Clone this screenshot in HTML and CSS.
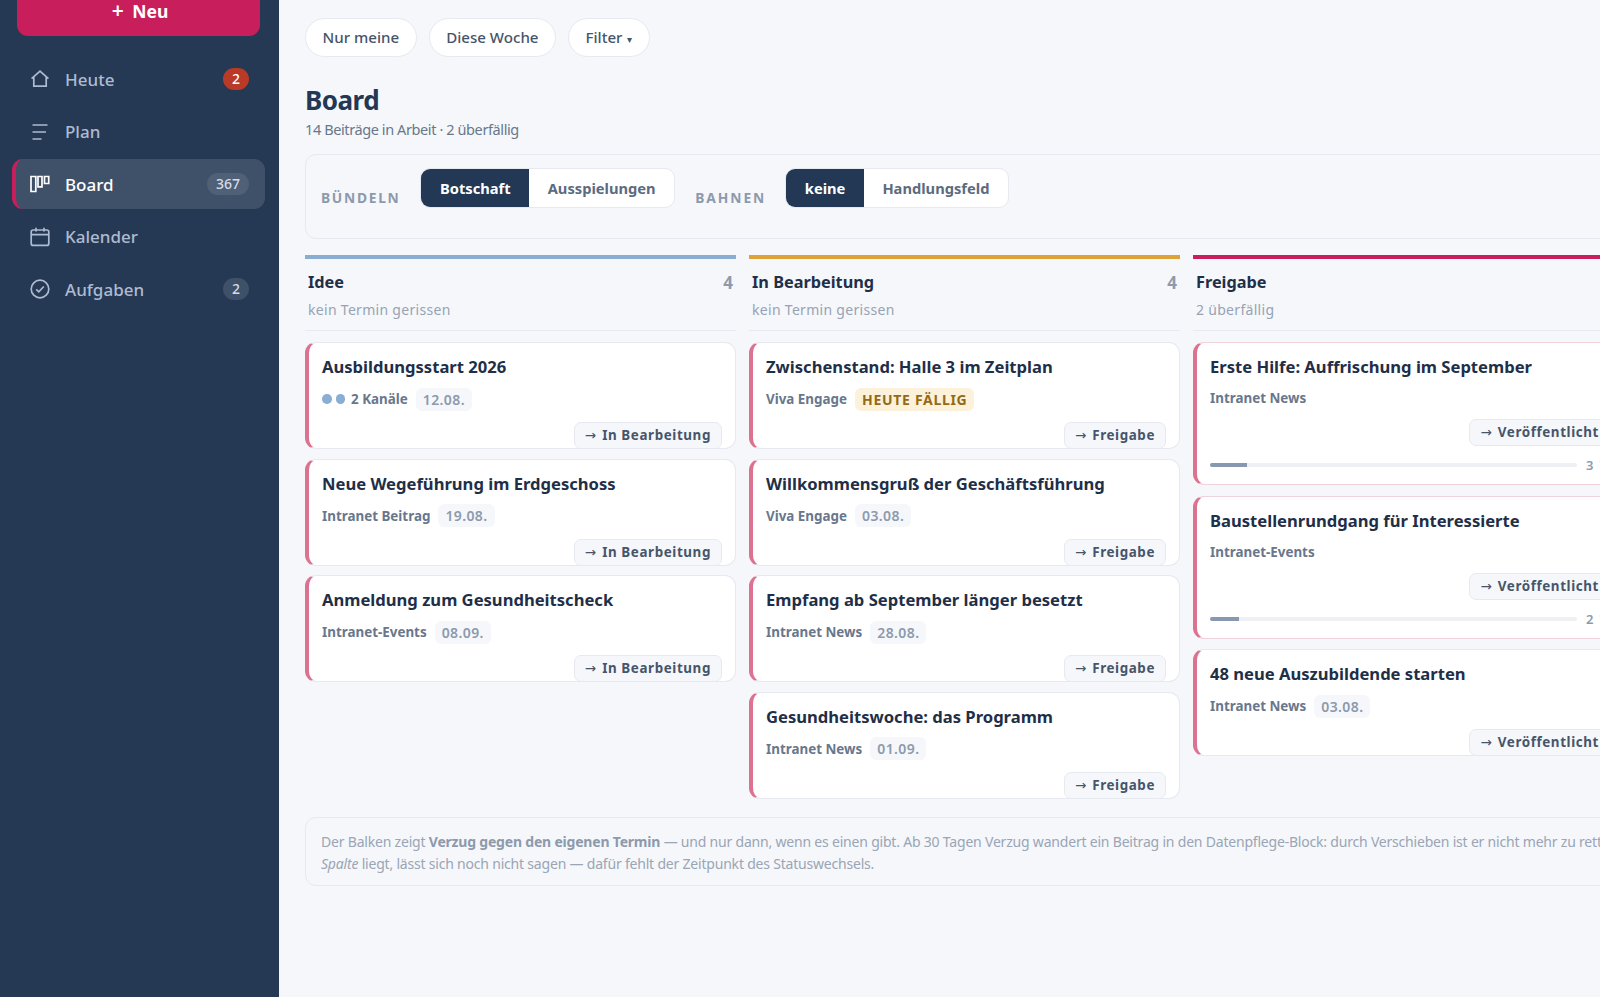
FILE: index.html
```html
<!DOCTYPE html>
<html lang="de">
<head>
<meta charset="utf-8">
<title>Board</title>
<link rel="stylesheet" href="styles.css">
</head>
<body>
<div class="app">
  <aside class="sidebar">
    <button class="new-btn"><span class="plus">+</span> Neu</button>
    <nav class="nav">
      <a class="nav-item">
        <svg class="nav-icon" viewBox="0 0 20 20"><path d="M1.6 9.6 10 2.2l8.4 7.4M3.8 8V17.2h12.4V8"/></svg>
        <span class="nav-label">Heute</span><span class="badge badge-red">2</span>
      </a>
      <a class="nav-item">
        <svg class="nav-icon" viewBox="0 0 20 20"><path d="M2.5 3h15M2.5 10h13.5M2.5 17h9"/></svg>
        <span class="nav-label">Plan</span>
      </a>
      <a class="nav-item active">
        <svg class="nav-icon" viewBox="0 0 20 20"><path d="M1 2.5h4.8v15H1zM8 2.5h4v10.4H8zM14.5 2.5h4.2v7h-4.2z"/></svg>
        <span class="nav-label">Board</span><span class="badge">367</span>
      </a>
      <a class="nav-item">
        <svg class="nav-icon" viewBox="0 0 20 20"><rect x="1.2" y="3" width="17.6" height="15.4" rx="2"/><path d="M1.2 7.6h17.6M6 .8v3.6M14 .8v3.6"/></svg>
        <span class="nav-label">Kalender</span>
      </a>
      <a class="nav-item">
        <svg class="nav-icon" viewBox="0 0 20 20"><circle cx="10" cy="10" r="8.8"/><path d="m6.2 10.4 2.6 2.5 5-5.4"/></svg>
        <span class="nav-label">Aufgaben</span><span class="badge">2</span>
      </a>
    </nav>
  </aside>

  <main class="main">
    <div class="pills">
      <button class="pill">Nur meine</button>
      <button class="pill">Diese Woche</button>
      <button class="pill">Filter <span class="caret">▾</span></button>
    </div>

    <h1 class="title">Board</h1>
    <p class="subtitle">14 Beiträge in Arbeit · 2 überfällig</p>

    <section class="controls">
      <span class="ctl-label ctl-first">Bündeln</span>
      <div class="segment">
        <span class="seg on">Botschaft</span><span class="seg">Ausspielungen</span>
      </div>
      <span class="ctl-label ctl-second">Bahnen</span>
      <div class="segment">
        <span class="seg on">keine</span><span class="seg">Handlungsfeld</span>
      </div>
    </section>

    <section class="board">
      <div class="column col-idea">
        <header class="col-head">
          <div class="col-top"><span class="col-name">Idee</span><span class="col-count">4</span></div>
          <div class="col-sub">kein Termin gerissen</div>
        </header>
        <article class="card">
          <h3 class="card-title">Ausbildungsstart 2026</h3>
          <div class="meta"><span class="dot"></span><span class="dot"></span><span class="channel">2 Kanäle</span><span class="date">12.08.</span></div>
          <div class="card-action"><span class="move"><span class="arrow">→</span> In Bearbeitung</span></div>
        </article>
        <article class="card">
          <h3 class="card-title">Neue Wegeführung im Erdgeschoss</h3>
          <div class="meta"><span class="channel">Intranet Beitrag</span><span class="date">19.08.</span></div>
          <div class="card-action"><span class="move"><span class="arrow">→</span> In Bearbeitung</span></div>
        </article>
        <article class="card">
          <h3 class="card-title">Anmeldung zum Gesundheitscheck</h3>
          <div class="meta"><span class="channel">Intranet-Events</span><span class="date">08.09.</span></div>
          <div class="card-action"><span class="move"><span class="arrow">→</span> In Bearbeitung</span></div>
        </article>
      </div>

      <div class="column col-work">
        <header class="col-head">
          <div class="col-top"><span class="col-name">In Bearbeitung</span><span class="col-count">4</span></div>
          <div class="col-sub">kein Termin gerissen</div>
        </header>
        <article class="card">
          <h3 class="card-title">Zwischenstand: Halle 3 im Zeitplan</h3>
          <div class="meta"><span class="channel">Viva Engage</span><span class="date date-due">HEUTE FÄLLIG</span></div>
          <div class="card-action"><span class="move"><span class="arrow">→</span> Freigabe</span></div>
        </article>
        <article class="card">
          <h3 class="card-title">Willkommensgruß der Geschäftsführung</h3>
          <div class="meta"><span class="channel">Viva Engage</span><span class="date">03.08.</span></div>
          <div class="card-action"><span class="move"><span class="arrow">→</span> Freigabe</span></div>
        </article>
        <article class="card">
          <h3 class="card-title">Empfang ab September länger besetzt</h3>
          <div class="meta"><span class="channel">Intranet News</span><span class="date">28.08.</span></div>
          <div class="card-action"><span class="move"><span class="arrow">→</span> Freigabe</span></div>
        </article>
        <article class="card">
          <h3 class="card-title">Gesundheitswoche: das Programm</h3>
          <div class="meta"><span class="channel">Intranet News</span><span class="date">01.09.</span></div>
          <div class="card-action"><span class="move"><span class="arrow">→</span> Freigabe</span></div>
        </article>
      </div>

      <div class="column col-release">
        <header class="col-head">
          <div class="col-top"><span class="col-name">Freigabe</span><span class="col-count">3</span></div>
          <div class="col-sub">2 überfällig</div>
        </header>
        <article class="card card-late">
          <h3 class="card-title">Erste Hilfe: Auffrischung im September</h3>
          <div class="meta"><span class="channel">Intranet News</span></div>
          <div class="card-action"><span class="move"><span class="arrow">→</span> Veröffentlicht</span></div>
          <div class="late"><div class="track"><div class="fill" style="width:10%"></div></div><span class="late-num">3 T.</span></div>
        </article>
        <article class="card card-late">
          <h3 class="card-title">Baustellenrundgang für Interessierte</h3>
          <div class="meta"><span class="channel">Intranet-Events</span></div>
          <div class="card-action"><span class="move"><span class="arrow">→</span> Veröffentlicht</span></div>
          <div class="late"><div class="track"><div class="fill" style="width:8%"></div></div><span class="late-num">2 T.</span></div>
        </article>
        <article class="card">
          <h3 class="card-title">48 neue Auszubildende starten</h3>
          <div class="meta"><span class="channel">Intranet News</span><span class="date">03.08.</span></div>
          <div class="card-action"><span class="move"><span class="arrow">→</span> Veröffentlicht</span></div>
        </article>
      </div>
    </section>

    <p class="note">Der Balken zeigt <strong>Verzug gegen den eigenen Termin</strong> — und nur dann, wenn es einen gibt. Ab 30 Tagen Verzug wandert ein Beitrag in den Datenpflege-Block: durch Verschieben ist er nicht mehr zu retten.<br><em>Spalte</em> liegt, lässt sich noch nicht sagen — dafür fehlt der Zeitpunkt des Statuswechsels.</p>
  </main>
</div>
</body>
</html>
```

FILE: styles.css
```css
* { box-sizing: border-box; }
html, body { margin: 0; height: 100%; overflow: hidden; }
body {
  font-family: "Noto Sans", "Open Sans", sans-serif;
  background: #f5f7fb;
  color: #233854;
}
.app { display: flex; width: 1600px; height: 997px; overflow: hidden; }

.sidebar {
  flex: 0 0 279px;
  background: #253954;
  padding: 0 14px 0 12px;
  overflow: hidden;
}
.new-btn {
  display: block;
  width: 243px;
  height: 51px;
  margin: -15px 0 0 5px;
  padding: 0 0 0 3px;
  border: 0;
  border-radius: 11px;
  background: #c81f5c;
  color: #fff;
  font: 700 17.5px "Noto Sans", sans-serif;
}
.plus { font-size: 21px; line-height: 20px; font-weight: 600; margin-right: 4px; }
.nav { display: flex; flex-direction: column; gap: 2.6px; margin-top: 18px; }
.nav-item {
  display: flex;
  align-items: center;
  height: 50px;
  padding: 0 16px 0 18px;
  border-radius: 11px;
  color: #aebbd0;
  font-size: 17px;
  font-weight: 500;
}
.nav-item.active {
  background: #3f5168;
  border-left: 4px solid #c81f5c;
  padding-left: 14px;
  color: #fff;
}
.nav-item.active .badge { background: #4f6077; }
.nav-icon {
  width: 20px;
  height: 20px;
  margin-right: 15px;
  fill: none;
  stroke: currentColor;
  stroke-width: 1.7;
  flex: none;
}
.nav-label { flex: 1; }
.badge {
  min-width: 26px;
  height: 22px;
  padding: 0 9px;
  border-radius: 11px;
  background: #3f5168;
  color: #d5dce7;
  font-size: 14px;
  line-height: 22px;
  text-align: center;
}
.badge-red { background: #b93a26; color: #fff; }

.main { flex: 1; min-width: 0; padding: 18px 0 0 26px; overflow: hidden; }
.pills { display: flex; gap: 12px; }
.pill {
  height: 38.5px;
  padding: 0 16.5px;
  border: 1px solid #e6e9ef;
  border-radius: 19.5px;
  background: #fff;
  color: #46556a;
  font: 500 15.1px "Noto Sans", sans-serif;
}
.caret { font-size: 10px; margin-left: 1px; }
.title { margin: 24.5px 0 0; font-size: 26px; line-height: 38px; font-weight: 700; letter-spacing: -.5px; color: #233854; }
.subtitle { margin: 0; font-size: 14.5px; line-height: 21px; letter-spacing: -.4px; color: #68778c; }
.controls {
  display: flex;
  align-items: flex-start;
  width: 1400px;
  height: 85px;
  margin-top: 14px;
  padding: 13px 15px;
  border: 1px solid #e6e9ef;
  border-radius: 11px;
}
.ctl-label {
  margin-top: 20px;
  margin-right: 20px;
  font-size: 13.8px;
  font-weight: 700;
  letter-spacing: 1.7px;
  text-transform: uppercase;
  color: #8d9aac;
}
.ctl-second { margin-left: 20px; margin-right: 19px; letter-spacing: 1.95px; }
.segment { display: flex; height: 40px; border: 1px solid #e6e9ef; border-radius: 10px; background: #fff; overflow: hidden; }
.seg { padding: 0 18.5px; line-height: 38px; font-size: 14.7px; font-weight: 700; color: #5c6b80; }
.seg.on { background: #233854; color: #fff; }

.board { display: flex; align-items: flex-start; gap: 13px; width: 1400px; margin-top: 16px; }
.column { flex: 0 0 431px; border-top: 4px solid #8aaed3; }
.col-work { border-top-color: #dda336; }
.col-release { border-top-color: #c81f5c; }
.col-head { padding: 11px 3px 0; height: 72px; border-bottom: 1px solid #e6e9ef; margin-bottom: 11px; }
.col-top { display: flex; justify-content: space-between; align-items: center; }
.col-name { font-size: 16.3px; line-height: 24px; font-weight: 700; color: #1f2f47; }
.col-count { font-size: 17px; font-weight: 700; color: #8d9aac; }
.col-sub { margin-top: 6px; font-size: 14px; line-height: 20px; letter-spacing: .3px; color: #97a3b4; }

.card {
  height: 107px;
  margin-bottom: 9.5px;
  padding: 12px 13px 0 13px;
  border: 1px solid #e6e9ef;
  border-left: 4px solid #dc7290;
  border-radius: 11px;
  background: #fff;
  overflow: hidden;
}
.card-late { height: 143px; border-color: #f0d3da; border-left-color: #dc7290; margin-bottom: 10.5px; }
.card-title { margin: 0; font-size: 16.6px; line-height: 24px; font-weight: 700; color: #1f2f47; }
.meta { display: flex; align-items: center; height: 24px; margin-top: 8px; font-size: 13.4px; font-weight: 700; color: #68778c; }
.card-late .meta { margin-top: 7px; }
.dot { width: 9.5px; height: 9.5px; margin-right: 4px; border-radius: 50%; background: #8aaed3; }
.dot + .channel { margin-left: 2px; }
.channel { margin-right: 8px; }
.date { padding: 0 7px; line-height: 23px; border-radius: 6px; background: #f5f7fb; color: #8d9aac; font-size: 14px; font-weight: 600; letter-spacing: .4px; }
.date-due { background: #fcf1da; color: #946a14; font-weight: 700; letter-spacing: .7px; }
.card-action { display: flex; justify-content: flex-end; margin-top: 11px; }
.card-late .card-action { margin-top: 9px; }
.move {
  height: 27px;
  padding: 0 10px;
  border: 1px solid #e6e9ef;
  border-radius: 7px;
  background: #f5f7fb;
  color: #46556a;
  font-size: 13.4px;
  line-height: 25px;
  font-weight: 700;
  letter-spacing: .6px;
}
.arrow { margin-right: 2px; font-family: "DejaVu Sans", sans-serif; font-weight: 400; letter-spacing: 0; }
.late { display: flex; align-items: center; gap: 9px; margin-top: 10px; }
.track { flex: 1; height: 4px; border-radius: 2px; background: #eef0f4; overflow: hidden; }
.fill { height: 100%; background: #8798b0; }
.late-num { flex: 0 0 18px; font-size: 13px; font-weight: 600; word-spacing: 3px; color: #8d9aac; white-space: nowrap; }

.note {
  width: 1400px;
  height: 69px;
  margin: 9px 0 0;
  padding: 13px 15px;
  border: 1px solid #e6e9ef;
  border-radius: 11px;
  font-size: 14px;
  line-height: 21.5px;
  letter-spacing: -.2px;
  color: #9aa5b5;
  white-space: nowrap;
}
.note strong { font-weight: 700; color: #8d9aac; }
```
